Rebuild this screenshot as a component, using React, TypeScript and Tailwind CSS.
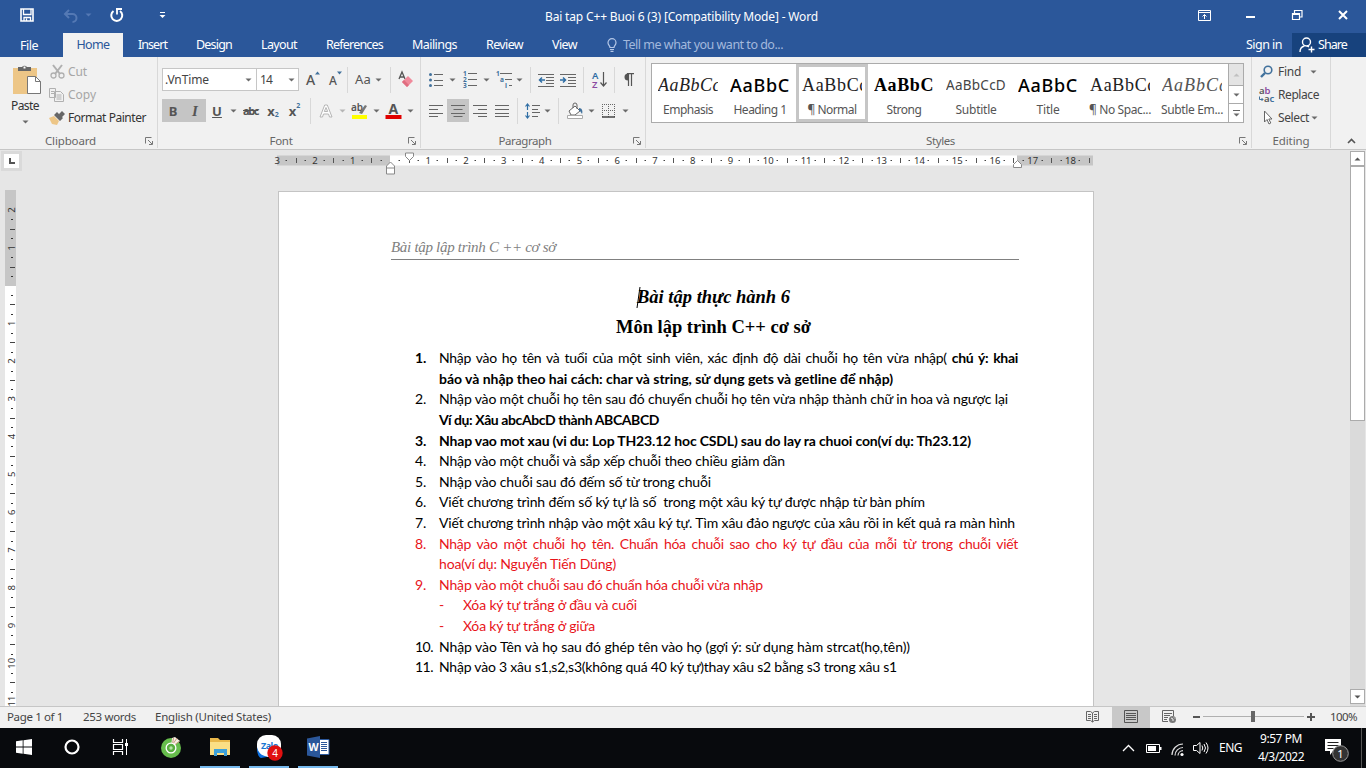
import { useLayoutEffect, useRef, useState } from "react";
import type { ReactNode } from "react";

/* Text tracked so that it fills a given width. */
function T({ w, children, className = "" }: { w: number; children: ReactNode; className?: string }) {
  const ref = useRef<HTMLSpanElement>(null);
  const [ls, setLs] = useState(0);
  useLayoutEffect(() => {
    const el = ref.current;
    if (!el) return;
    el.style.letterSpacing = "0px";
    const n = (el.textContent || "").length;
    setLs((w - el.getBoundingClientRect().width) / n);
    el.style.letterSpacing = "";
  }, [w]);
  return (
    <span ref={ref} className={"inline-block shrink-0 whitespace-pre " + className} style={{ letterSpacing: ls }}>
      {children}
    </span>
  );
}

function Svg({ w, h, children, className = "" }: { w: number; h: number; children: ReactNode; className?: string }) {
  return (
    <svg width={w} height={h} viewBox={`0 0 ${w} ${h}`} fill="none" className={"block shrink-0 overflow-visible " + className}>
      {children}
    </svg>
  );
}

const Arrow = ({ c = "#6a6a6a", className = "" }) => (
  <Svg w={7} h={4} className={className}><path d="M0.5 0.5h6l-3 3z" fill={c} /></Svg>
);
const Sep = ({ className = "" }) => <div className={"h-[26px] w-px shrink-0 bg-[#d8d8d8] " + className} />;
const Launcher = () => (
  <Svg w={8} h={8}>
    <path d="M0.5 6.5v-6h6M3 3l4 4M7.5 4v3.5H4" stroke="#777" />
  </Svg>
);

function Cell({ className = "", children }: { className?: string; children?: ReactNode }) {
  return <div className={"flex h-[23px] shrink-0 items-center justify-center " + className}>{children}</div>;
}

/* ---------- title bar and tabs ---------- */
function TitleBar() {
  return (
    <div className="flex h-[33px] items-center text-white">
      <Svg w={14} h={14} className="mt-[-3px] ml-5">
        <path d="M1 1h12v12H1z" stroke="#fff" strokeWidth="1.6" />
        <path d="M3.500 1v5.500h7.500V1M4 13V9.500h6.500V13M6.500 10.500v2.500" stroke="#fff" strokeWidth="1.3" />
      </Svg>
      <Svg w={15} h={14} className="mt-[-2px] ml-[29px]">
        <path d="M1.500 5h8a4 4 0 0 1 0 8M6 1L2 5l4 4" stroke="#5479b4" strokeWidth="2" />
      </Svg>
      <Arrow c="#5479b4" className="mt-[-3px] ml-[7px]" />
      <Svg w={15} h={15} className="mt-[-2px] ml-[17px]">
        <path d="M4.500 3A5.500 5.500 0 1 0 11 3" stroke="#fff" strokeWidth="2" />
        <path d="M7 1h6M8 6.500V1" stroke="#fff" strokeWidth="1.800" />
      </Svg>
      <Svg w={7} h={7} className="mt-[-2px] ml-[35px]">
        <path d="M1 0.500h5" stroke="#fff" /><path d="M0.500 3h6l-3 3z" fill="#fff" />
      </Svg>
      <T w={273} className="ml-[379px] text-[12px]">Bai tap C++ Buoi 6 (3) [Compatibility Mode] - Word</T>
      <Svg w={13} h={11} className="mt-[-3px] ml-[380px]">
        <path d="M0.500 0.500h12v10h-12zM0.500 2.500h12M6.500 9V4.500M4.500 6.500l2-2 2 2" stroke="#fff" />
      </Svg>
      <Svg w={9} h={3} className="mt-[1px] ml-[35px]"><path d="M0 1h9" stroke="#fff" strokeWidth="2" /></Svg>
      <Svg w={11} h={10} className="mt-[-3px] ml-[37px]">
        <path d="M0.500 3.500h7v6h-7zM2.500 3V0.500h7.500V7H8M0.500 4.500h7" stroke="#fff" strokeWidth="1.200" />
      </Svg>
      <Svg w={10} h={10} className="mt-[-3px] ml-[35px]"><path d="M1 1l8 8M9 1L1 9" stroke="#fff" strokeWidth="2" /></Svg>
    </div>
  );
}

function Tabs() {
  return (
    <div className="flex h-6 items-center text-[12.500px] text-white">
      <T w={18} className="ml-5 mt-[2px]">File</T>
      <div className="ml-[25px] flex h-6 w-[60px] items-center justify-center bg-[#f1f1f1] text-[#2b579a]"><T w={33}>Home</T></div>
      <T w={29} className="ml-[15px] mt-px">Insert</T>
      <T w={36} className="ml-[29px] mt-px">Design</T>
      <T w={36} className="ml-[29px] mt-px">Layout</T>
      <T w={57} className="ml-[29px] mt-px">References</T>
      <T w={45} className="ml-[29px] mt-px">Mailings</T>
      <T w={37} className="ml-[29px] mt-px">Review</T>
      <T w={25} className="ml-[29px] mt-px">View</T>
      <Svg w={10} h={14} className="ml-[30px]">
        <path d="M3 9.500C3 7.500 1 7 1 4.700a4 4 0 0 1 8 0C9 7 7 7.500 7 9.500zM3 11.500h4M3.500 13.300h3" stroke="#b4c7e7" strokeWidth="1.200" />
      </Svg>
      <T w={160} className="mt-px ml-[6px] text-[#a3b9dd]">Tell me what you want to do...</T>
      <T w={36} className="mt-px ml-[463px]">Sign in</T>
      <div className="ml-[10px] flex h-6 w-[74px] items-center bg-[#17427d]">
        <Svg w={16} h={16} className="ml-[7px]">
          <circle cx="7.500" cy="5" r="4" stroke="#fff" strokeWidth="1.400" />
          <path d="M1 15c0-4 2-5.500 4.500-6M9.500 12.500h6M12.500 9.500v6M8 8.800l2 1" stroke="#fff" strokeWidth="1.400" />
        </Svg>
        <T w={29} className="ml-[3px] mt-px">Share</T>
      </div>
    </div>
  );
}

/* ---------- ribbon ---------- */
function Group({ className, label, labelW, launcher = true, children }: { className: string; label: string; labelW: number; launcher?: boolean; children: ReactNode }) {
  return (
    <div className={"flex shrink-0 flex-col border-r border-[#d8d8d8] " + className}>
      <div className="h-[77px]">{children}</div>
      <div className="flex h-[14px] items-center text-[#666]">
        <div className="flex flex-1 justify-center"><T w={labelW}>{label}</T></div>
        {launcher && <div className="mr-1 w-[12px] pl-1"><Launcher /></div>}
      </div>
    </div>
  );
}

function Clipboard() {
  return (
    <Group className="w-[158px]" label="Clipboard" labelW={51}>
      <div className="flex">
        <div className="ml-[10px] flex w-[30px] flex-col items-center">
          <Svg w={30} h={31} className="mt-[7px] ml-[3px]">
            <path d="M1 4h24v26H1z" fill="#edc687" />
            <path d="M6 7V3h4a3 3 0 0 1 5 0h4v4z" fill="#666" /><path d="M11.500 2.500h2v2h-2z" fill="#fff" />
            <path d="M15.500 12.500h8l5 5v12h-13z" fill="#fff" stroke="#777" /><path d="M23.500 12.500v5h5" stroke="#777" />
          </Svg>
          <T w={28} className="mt-[3px] text-[12px] leading-[16px] text-[#333]">Paste</T>
          <Arrow className="mt-[6px]" />
        </div>
        <div className="ml-[9px] flex flex-col pt-[3px] text-[12px] text-[#a6a6a6]">
          <div className="flex h-[23px] items-center">
            <Svg w={15} h={15} className="ml-px">
              <path d="M3 1l7 9M12 1L5 10" stroke="#b0b0b0" strokeWidth="2" />
              <circle cx="3.500" cy="11.500" r="2.500" stroke="#b0b0b0" strokeWidth="1.300" /><circle cx="11.500" cy="11.500" r="2.500" stroke="#b0b0b0" strokeWidth="1.300" />
            </Svg>
            <T w={19} className="ml-[3px]">Cut</T>
          </div>
          <div className="flex h-[23px] items-center">
            <Svg w={15} h={14}>
              <path d="M0.500 0.500h6v9h-6zM5.500 3.500h6l3 3v7h-9z" fill="#f1f1f1" stroke="#b0b0b0" />
              <path d="M2 3.500h3M2 5.500h3M7.500 7h5M7.500 9h5M7.500 11h5" stroke="#b0b0b0" />
            </Svg>
            <T w={28} className="ml-1">Copy</T>
          </div>
          <div className="flex h-[23px] items-center text-[#333]">
            <Svg w={16} h={14}>
              <path d="M0 7l5-2 5 5-2 4-5-1z" fill="#edc687" />
              <path d="M5 4l3-3 6 6-3 3zM10 3l3-3 3 3-3 3z" fill="#666" />
            </Svg>
            <T w={78} className="ml-[3px]">Format Painter</T>
          </div>
        </div>
      </div>
    </Group>
  );
}

function FontGroup() {
  return (
    <Group className="w-[263px]" label="Font" labelW={23}>
      <div className="box-content flex h-[23px] items-center pt-[11px] text-[#555]">
        <div className="ml-1 flex h-[23px] w-[95px] items-center border border-[#c6c6c6] bg-white text-[12px] text-[#444]">
          <T w={44} className="ml-[2px]">.VnTime</T><Arrow className="ml-[36px]" />
        </div>
        <div className="-ml-px flex h-[23px] w-[43px] items-center border border-[#c6c6c6] bg-white text-[12px] text-[#444]">
          <T w={12} className="ml-[3px]">14</T><Arrow className="ml-[16px]" />
        </div>
        <div className="ml-[7px] flex w-[14px] items-start">
          <span className="text-[14px] font-medium leading-[20px]">A</span><Svg w={5} h={4} className="mt-[1px]"><path d="M0 3.500h5l-2.500-3z" fill="#41719c" /></Svg>
        </div>
        <div className="ml-[9px] flex w-[13px] items-start">
          <span className="mt-[2px] text-[12px] font-medium leading-[18px]">A</span><Svg w={5} h={4} className="mt-[1px]"><path d="M0 0.500h5l-2.500 3z" fill="#41719c" /></Svg>
        </div>
        <Sep className="ml-[5px]" />
        <T w={16} className="ml-[7px] text-[13px]">Aa</T>
        <Arrow className="ml-1" />
        <Sep className="ml-[8px]" />
        <Svg w={16} h={17} className="ml-[7px]">
          <path d="M1 8L4 1l3 7M2 6h4" stroke="#555" strokeWidth="1.300" />
          <path d="M4 11l6-6 5 5-6 6z" fill="#f08a9b" /><path d="M4 11l2-2 5 5-2 2z" fill="#e06d80" />
        </Svg>
      </div>
      <div className="mt-[8px] ml-1 flex text-[13px] leading-[18px] text-[#555]">
        <Cell className="w-[22px] bg-[#c5c5c5] font-bold">B</Cell>
        <Cell className="w-[22px] bg-[#c5c5c5] font-['Liberation_Serif'] text-[15px] font-bold italic">I</Cell>
        <Cell className="w-[22px] font-bold underline">U</Cell>
        <Cell className="w-[10px]"><Arrow /></Cell>
        <Cell className="w-[25px] text-[11px] font-bold line-through"><T w={15}>abc</T></Cell>
        <Cell className="w-[20px] font-bold">x<span className="mt-[9px] text-[7px] leading-[8px] text-[#41719c]">2</span></Cell>
        <Cell className="w-[23px] font-bold">x<span className="mb-[9px] text-[7px] leading-[8px] text-[#41719c]">2</span></Cell>
        <Cell className="w-[8px]"><Sep /></Cell>
        <Cell className="w-[24px]">
          <Svg w={14} h={14}><path d="M1 13L5.700 1h2.600L13 13h-2.500l-1-3h-5l-1 3zM5.300 7.500h3.400L7 3.500z" stroke="#b5b5b5" fill="#fff" /></Svg>
        </Cell>
        <Cell className="w-[8px]"><Arrow c="#b5b5b5" /></Cell>
        <Cell className="w-[26px]">
          <Svg w={17} h={18}>
            <text x="0" y="9" fontSize="10" fontWeight="600" fill="#555">ab</text>
            <path d="M8 11l6-8 2 1-5 8z" fill="#777" /><path d="M1 13h15v4H1z" fill="#ff0" />
          </Svg>
        </Cell>
        <Cell className="w-[8px]"><Arrow /></Cell>
        <Cell className="w-[26px]">
          <Svg w={17} h={18}>
            <text x="3.500" y="12" fontSize="14" fontWeight="700" fill="#555">A</text><path d="M0.500 13h16v4h-16z" fill="#e00000" />
          </Svg>
        </Cell>
        <Cell className="w-[9px]"><Arrow /></Cell>
      </div>
    </Group>
  );
}

const Lines = ({ d }: { d: string }) => <Svg w={14} h={12}><path d={d} stroke="#666" /></Svg>;

function Paragraph() {
  return (
    <Group className="w-[225px]" label="Paragraph" labelW={53}>
      <div className="ml-[8px] box-content flex h-[23px] items-center pt-[11px]">
        <Svg w={14} h={16}>
          <circle cx="1.500" cy="2.500" r="1.500" fill="#41719c" /><circle cx="1.500" cy="8" r="1.500" fill="#41719c" /><circle cx="1.500" cy="13.500" r="1.500" fill="#41719c" />
          <path d="M5 2.500h9M5 8.500h9M5 13.500h9" stroke="#666" />
        </Svg>
        <Arrow className="ml-[6px]" />
        <Svg w={15} h={17} className="ml-[7px]">
          <text fontSize="6.500" fontWeight="700" fill="#41719c"><tspan x="0" y="5">1</tspan><tspan x="0" y="11">2</tspan><tspan x="0" y="17">3</tspan></text>
          <path d="M5 2.500h9M5 8.500h9M5 14.500h9" stroke="#666" />
        </Svg>
        <Arrow className="ml-[5px]" />
        <Svg w={17} h={17} className="ml-[6px]">
          <text fontSize="6.500" fontWeight="700" fill="#41719c"><tspan x="0" y="5">1</tspan><tspan x="4" y="11">a</tspan><tspan x="9" y="17">i</tspan></text>
          <path d="M4 2.500h12M9 8.500h7M13 14.500h3" stroke="#666" />
        </Svg>
        <Arrow className="ml-[3px]" />
        <Sep className="ml-[7px]" />
        <Svg w={16} h={14} className="ml-[7px]">
          <path d="M0 1.500h16M8 4.500h8M8 7.500h8M8 10.500h8M0 13.500h16" stroke="#666" /><path d="M7 7H1.500M4 4.500L1.500 7 4 9.500" stroke="#2e6da4" strokeWidth="1.500" />
        </Svg>
        <Svg w={16} h={14} className="ml-[6px]">
          <path d="M0 1.500h16M8 4.500h8M8 7.500h8M8 10.500h8M0 13.500h16" stroke="#666" /><path d="M0 7h5.500M3 4.500L5.500 7 3 9.500" stroke="#2e6da4" strokeWidth="1.500" />
        </Svg>
        <Sep className="ml-[7px]" />
        <Svg w={15} h={17} className="ml-[8px]">
          <text x="0" y="8" fontSize="9.500" fontWeight="600" fill="#2e6da4">A</text><text x="0" y="16.500" fontSize="9.500" fontWeight="600" fill="#8a4aa0">Z</text>
          <path d="M11.500 1v14M8.500 11.500l3 3.500 3-3.500" stroke="#555" strokeWidth="1.200" />
        </Svg>
        <Sep className="ml-[7px]" />
        <Svg w={10} h={13} className="ml-[9px]">
          <path d="M4 0.500a3.500 3.500 0 0 0 0 7z" fill="#555" /><path d="M3 0.600h7M4.500 0.500V13M7.500 0.500V13" stroke="#555" strokeWidth="1.200" />
        </Svg>
      </div>
      <div className="mt-[8px] ml-[4px] flex">
        <Cell className="w-[22px]"><Lines d="M0 0.500h14M0 4.500h9M0 8.500h14M0 11.500h9" /></Cell>
        <Cell className="w-[22px] bg-[#c5c5c5]"><Lines d="M0 0.500h14M2.500 4.500h9M0 8.500h14M2.500 11.500h9" /></Cell>
        <Cell className="w-[22px]"><Lines d="M0 0.500h14M5 4.500h9M0 8.500h14M5 11.500h9" /></Cell>
        <Cell className="w-[22px]"><Lines d="M0 0.500h14M0 4.500h14M0 8.500h14M0 11.500h14" /></Cell>
        <Cell className="w-[8px]"><Sep /></Cell>
        <Cell className="ml-[4px] w-[15px]">
          <Svg w={15} h={16}>
            <path d="M2.500 1v6M0.500 3.500l2-2.500 2 2.500M2.500 15V9M0.500 12.500l2 2.500 2-2.500" stroke="#2e6da4" strokeWidth="1.200" />
            <path d="M7 2.500h8M7 6.500h6M7 9.500h8M7 13.500h6" stroke="#666" />
          </Svg>
        </Cell>
        <Cell className="ml-px w-[12px]"><Arrow /></Cell>
        <Cell className="w-[10px]"><Sep /></Cell>
        <Cell className="ml-[3px] w-[18px]">
          <Svg w={17} h={16}>
            <path d="M2 8l6-5 5 5-5 4H4z" fill="#fff" stroke="#666" /><path d="M6 5V2a2 2 0 0 1 4 0v4" stroke="#666" />
            <path d="M12 5c3 0 4 3 3 6-1-1-1-3-3-3z" fill="#41719c" /><path d="M0.500 12.500h15v3h-15z" fill="#fff" stroke="#aaa" />
          </Svg>
        </Cell>
        <Cell className="w-[14px]"><Arrow /></Cell>
        <Cell className="ml-[3px] w-[15px]">
          <Svg w={14} h={14}><path d="M0.500 0v13M6.500 0v13M12.500 0v13M0 0.500h13M0 6.500h13" stroke="#666" strokeDasharray="1 1" /><path d="M0 13h13" stroke="#444" strokeWidth="1.500" /></Svg>
        </Cell>
        <Cell className="w-[19px]"><Arrow /></Cell>
      </div>
    </Group>
  );
}

const styles = [
  { n: "Emphasis", nw: 50, s: "AaBbCc", c: "font-['Liberation_Serif'] italic text-[18px] text-[#222]", sw: 63 },
  { n: "Heading 1", nw: 53, s: "AaBbC", c: "text-[18px] font-medium text-black", sw: 60 },
  { n: "¶ Normal", nw: 49, s: "AaBbCc", c: "font-['Liberation_Serif'] text-[18px] text-[#222]", sw: 66 },
  { n: "Strong", nw: 35, s: "AaBbC", c: "font-['Liberation_Serif'] text-[18px] font-bold text-black", sw: 60 },
  { n: "Subtitle", nw: 41, s: "AaBbCcD", c: "text-[13.500px] text-[#444]", sw: 60 },
  { n: "Title", nw: 23, s: "AaBbC", c: "text-[18px] font-medium text-black", sw: 60 },
  { n: "¶ No Spac...", nw: 62, s: "AaBbCc", c: "font-['Liberation_Serif'] text-[18px] text-[#222]", sw: 66 },
  { n: "Subtle Em...", nw: 62, s: "AaBbCc", c: "font-['Liberation_Serif'] italic text-[18px] text-[#555]", sw: 66 },
];

function Styles() {
  return (
    <Group className="w-[606px]" label="Styles" labelW={29}>
      <div className="mt-[6px] ml-[5px] flex h-[60px] w-[593px] border border-[#ababab] bg-white">
        {styles.map((s, i) => (
          <div key={s.n} className={"flex h-[58px] w-[72px] shrink-0 flex-col items-center border-[3px] " + (i === 2 ? "border-[#c6c6c6]" : "border-transparent")}>
            <div className="mt-[5px] flex h-[26px] w-[60px] items-center overflow-hidden"><T w={s.sw} className={"leading-[26px] " + s.c}>{s.s}</T></div>
            <T w={s.nw} className="mt-[4px] text-[12px] leading-[16px] text-[#555]">{s.n}</T>
          </div>
        ))}
        <div className="ml-auto flex w-[15px] flex-col border-l border-[#ababab]">
          <div className="flex h-[21px] items-center justify-center bg-[#e4e4e4]"><Arrow c="#c0c0c0" className="rotate-180" /></div>
          <div className="flex flex-1 items-center justify-center border-y border-[#ababab]"><Arrow /></div>
          <div className="flex h-[18px] flex-col items-center justify-center gap-[2px]"><div className="h-px w-[7px] bg-[#666]" /><Arrow /></div>
        </div>
      </div>
    </Group>
  );
}

function Editing() {
  return (
    <Group className="w-[79px]" label="Editing" labelW={37} launcher={false}>
      <div className="ml-[7px] flex flex-col pt-[3px] text-[12px] text-[#444]">
        <div className="flex h-[23px] items-center">
          <Svg w={15} h={13} className="-mt-px"><circle cx="9" cy="5" r="3.800" stroke="#41719c" strokeWidth="1.600" /><path d="M6 8l-4 4" stroke="#41719c" strokeWidth="2.400" /></Svg>
          <T w={23} className="ml-[4px]">Find</T><Arrow className="ml-[9px]" />
        </div>
        <div className="flex h-[23px] items-center">
          <Svg w={16} h={16}>
            <text x="0" y="7" fontSize="9.500" fontWeight="600" fill="#555">a<tspan fill="#8a4aa0">b</tspan></text>
            <text x="5" y="15" fontSize="9.500" fontWeight="600" fill="#555">a<tspan fill="#41719c">c</tspan></text>
            <path d="M0.500 9.500v3H4M2.500 11L4 12.500 2.500 14" stroke="#41719c" />
          </Svg>
          <T w={41} className="ml-[3px]">Replace</T>
        </div>
        <div className="flex h-[23px] items-center">
          <Svg w={16} h={15}><path d="M5.500 1v11l2.500-2.500 2 4.500 1.800-1-2-4h3.200z" fill="#fff" stroke="#666" /></Svg>
          <T w={31} className="ml-[3px]">Select</T><Arrow className="ml-[2px]" />
        </div>
      </div>
    </Group>
  );
}

/* ---------- rulers ---------- */
function HRuler() {
  const p = 37.78;
  const items: ReactNode[] = [];
  for (let q = -12; q <= 74; q++) {
    const x = 113 + (q * p) / 4;
    const m = ((q % 4) + 4) % 4;
    if (q === 0) continue;
    if (m === 0) items.push(<text key={q} x={x + 0.5} y="10" fontSize="9.500" fill="#333" textAnchor="middle">{Math.abs(q / 4)}</text>);
    else if (m === 2) items.push(<path key={q} d={`M${Math.round(x) + 0.5} 4v5`} stroke="#555" />);
    else items.push(<path key={q} d={`M${Math.round(x) - 0.5} 6.500h1.500`} stroke="#444" />);
  }
  return (
    <Svg w={818} h={24} className="ml-[261px]">
      <path d="M0 1.500h113v10H0z" fill="#c6c6c6" /><path d="M113 1.500h627v10H113z" fill="#fff" /><path d="M740 1.500h76v10h-76z" fill="#c6c6c6" />
      {items}
      <path d="M128.500 -1h8v3.500l-4 4-4-4z" fill="#fff" stroke="#888" />
      <path d="M109.500 20v-8l4-4 4 4v8zM109.500 14h8" fill="#fff" stroke="#888" />
      <path d="M736.500 13.500v-3l4-4 4 4v3z" fill="#fff" stroke="#888" />
    </Svg>
  );
}

function VRuler() {
  const p = 37.78;
  const items: ReactNode[] = [];
  for (let q = -9; q <= 44; q++) {
    const y = 95.500 + (q * p) / 4;
    const m = ((q % 4) + 4) % 4;
    if (q === 0) continue;
    if (m === 0) items.push(<text key={q} x="0" y="0" fontSize="9.500" fill="#333" textAnchor="middle" transform={`translate(10 ${y}) rotate(-90)`}>{Math.abs(q / 4)}</text>);
    else if (m === 2) items.push(<path key={q} d={`M5 ${Math.round(y) + 0.5}h5`} stroke="#444" />);
    else if (q > -9) items.push(<path key={q} d={`M6 ${Math.round(y) + 0.5}h2`} stroke="#333" />);
  }
  return (
    <Svg w={11} h={516} className="mt-[12px] ml-[5px]">
      <path d="M0 0h11v96H0z" fill="#c6c6c6" /><path d="M0 96h11v420H0z" fill="#fff" />
      {items}
    </Svg>
  );
}

/* ---------- document ---------- */
function Item({ n, bold = false, red = false, children }: { n: string; bold?: boolean; red?: boolean; children: ReactNode }) {
  return (
    <div className={"flex h-[20.600px] items-center " + (red ? "text-[#e8141a] " : "") + (bold ? "font-bold" : "")}>
      <div className="w-6 shrink-0">{n && <T w={n.length === 2 ? 11 : 18}>{n}</T>}</div>
      {children}
    </div>
  );
}

function Page() {
  return (
    <div className="ml-[262px] h-[515px] w-[816px] border border-b-0 border-[#c4c4c4] bg-white font-['Liberation_Serif',serif]">
      <div className="mt-[46px] ml-[112px] h-[22px] w-[628px] border-b border-[#808080] text-[15px] leading-[18px] text-[#808080] italic">
        <T w={165}>Bài tập lập trình C ++ cơ sở</T>
      </div>
      <div className="mt-[25px] ml-[357px] flex h-[26px] items-center text-[18.500px] font-bold italic">
        <Svg w={5} h={22} className="-mr-[4px]"><path d="M4 0L1 21" stroke="#000" /></Svg>
        <T w={153}>Bài tập thực hành 6</T>
      </div>
      <div className="mt-[4px] ml-[337px] flex h-[26px] items-center text-[18.500px] font-bold">
        <T w={195}>Môn lập trình C++ cơ sở</T>
      </div>
      <div className="mt-[7.300px] ml-[136px] w-[604px] font-['Lato','Open_Sans',sans-serif] text-[14px] leading-[20.600px] text-black">
        <Item n="1." bold>
          <div className="w-[579px] text-justify font-normal tracking-[-0.300px] [text-align-last:justify]">Nhập vào họ tên và tuổi của một sinh viên, xác định độ dài chuỗi họ tên vừa nhập( <b>chú ý: khai</b></div>
        </Item>
        <Item n="" bold><T w={454}>báo và nhập theo hai cách: char và string, sử dụng gets và getline để nhập)</T></Item>
        <Item n="2."><T w={569}>Nhập vào một chuỗi họ tên sau đó chuyển chuỗi họ tên vừa nhập thành chữ in hoa và ngược lại</T></Item>
        <Item n="" bold><T w={220}>Ví dụ: Xâu abcAbcD thành ABCABCD</T></Item>
        <Item n="3." bold><T w={532}>Nhap vao mot xau (vi du: Lop TH23.12 hoc CSDL) sau do lay ra chuoi con(ví dụ: Th23.12)</T></Item>
        <Item n="4."><T w={346}>Nhập vào một chuỗi và sắp xếp chuỗi theo chiều giảm dần</T></Item>
        <Item n="5."><T w={272}>Nhập vào chuỗi sau đó đếm số từ trong chuỗi</T></Item>
        <Item n="6."><T w={486}>Viết chương trình đếm số ký tự là số  trong một xâu ký tự được nhập từ bàn phím</T></Item>
        <Item n="7."><T w={576}>Viết chương trình nhập vào một xâu ký tự. Tìm xâu đảo ngược của xâu rồi in kết quả ra màn hình</T></Item>
        <Item n="8." red>
          <div className="w-[579px] text-justify tracking-[-0.300px] [text-align-last:justify]">Nhập vào một chuỗi họ tên. Chuẩn hóa chuỗi sao cho ký tự đầu của mỗi từ trong chuỗi viết</div>
        </Item>
        <Item n="" red><T w={177}>hoa(ví dụ: Nguyễn Tiến Dũng)</T></Item>
        <Item n="9." red><T w={324}>Nhập vào một chuỗi sau đó chuẩn hóa chuỗi vừa nhập</T></Item>
        <Item n="" red><span className="w-6">-</span><T w={174}>Xóa ký tự trắng ở đầu và cuối</T></Item>
        <Item n="" red><span className="w-6">-</span><T w={132}>Xóa ký tự trắng ở giữa</T></Item>
        <Item n="10."><T w={471}>Nhập vào Tên và họ sau đó ghép tên vào họ (gợi ý: sử dụng hàm strcat(họ,tên))</T></Item>
        <Item n="11."><T w={458}>Nhập vào 3 xâu s1,s2,s3(không quá 40 ký tự)thay xâu s2 bằng s3 trong xâu s1</T></Item>
      </div>
    </div>
  );
}

function Workspace() {
  return (
    <div className="flex h-[556px] bg-[#e6e6e6]">
      <div className="w-4 shrink-0">
        <div className="relative z-10 flex h-[28px] items-start pl-[1px] pt-[1px]">
          <div className="flex h-5 w-[21px] shrink-0 items-center justify-center border-[3px] border-[#dadada] bg-white">
            <Svg w={6} h={6}><path d="M1 0v5h5" stroke="#555" strokeWidth="2" /></Svg>
          </div>
        </div>
        <VRuler />
      </div>
      <div className="flex flex-1 flex-col">
        <div className="h-[41px] pt-[3.500px]"><HRuler /></div>
        <Page />
      </div>
      <div className="flex w-[16px] shrink-0 flex-col pr-px pt-[1px]">
        <div className="flex h-full w-[15px] flex-col items-center bg-[#dadada]">
          <div className="flex h-[15px] w-[15px] shrink-0 items-center justify-center border border-[#ababab] bg-white"><Arrow c="#555" className="rotate-180" /></div>
          <div className="h-[255px] w-[15px] border border-[#ababab] bg-white" />
          <div className="mt-auto mb-[2px] flex h-[15px] w-[15px] shrink-0 items-center justify-center border border-[#ababab] bg-white"><Arrow c="#555" /></div>
        </div>
      </div>
    </div>
  );
}

function StatusBar() {
  return (
    <div className="flex h-[22px] items-center border-t border-[#c6c6c6] bg-[#f1f1f1] text-[11.500px] text-[#444]">
      <T w={56} className="ml-[7px] -mt-[2px]">Page 1 of 1</T>
      <T w={53} className="ml-5 -mt-[2px]">253 words</T>
      <T w={116} className="ml-[19px] -mt-[2px]">English (United States)</T>
      <Svg w={13} h={13} className="-mt-[2px] ml-[815px]">
        <path d="M0.500 1.500h4l2 1.500 2-1.500h4v9h-4l-2 1.500-2-1.500h-4zM6.500 3v9M2 4.500h3M2 6.500h3M2 8.500h3M8 4.500h3M8 6.500h3M8 8.500h3" stroke="#666" />
      </Svg>
      <div className="ml-[13px] flex h-[21px] w-[38px] items-center justify-center bg-[#c8c8c8] pb-[2px]">
        <Svg w={14} h={13}><path d="M0.500 0.500h13v12h-13zM2 3.500h10M2 5.500h10M2 7.500h10M2 9.500h10" stroke="#555" /></Svg>
      </div>
      <Svg w={15} h={14} className="-mt-[2px] ml-3">
        <path d="M6 11.500H0.500v-11h11V6M2 3.500h8M2 5.500h6M2 7.500h4M2 9.500h3" stroke="#666" /><circle cx="10.500" cy="9.500" r="3.500" fill="#777" /><path d="M9 8l2 1v2M12 7.500l1 1" stroke="#eee" />
      </Svg>
      <Svg w={7} h={2} className="-mt-[2px] ml-[16px]"><path d="M0 1h7" stroke="#555" strokeWidth="2" /></Svg>
      <div className="-mt-[2px] ml-[3px] flex h-3 w-[101px] items-center">
        <div className="h-px w-12 bg-[#b0b0b0]" /><div className="h-[11px] w-1 bg-[#666]" /><div className="h-px flex-1 bg-[#b0b0b0]" />
      </div>
      <Svg w={8} h={8} className="-mt-[2px] ml-[3px]"><path d="M0 4h8M4 0v8" stroke="#555" strokeWidth="2" /></Svg>
      <T w={27} className="-mt-[2px] ml-[15px]">100%</T>
    </div>
  );
}

function TaskItem({ open = false, children }: { open?: boolean; children: ReactNode }) {
  return (
    <div className={"flex h-10 w-10 items-center justify-center border-b-2 " + (open ? "border-[#76b9ed]" : "border-transparent")}>{children}</div>
  );
}

function Taskbar() {
  return (
    <div className="flex h-10 items-center bg-[#080a0d] text-[12px] text-white">
      <div className="ml-1 flex gap-[9px]">
        <TaskItem><Svg w={16} h={16}><path d="M0 2.300l6.700-1v6.300H0zM7.500 1.200L16 0v7.600H7.500zM0 8.400h6.700v6.300l-6.700-1zM7.500 8.400H16V16l-8.500-1.200z" fill="#fff" /></Svg></TaskItem>
        <TaskItem><Svg w={16} h={16} className="-ml-[3px]"><circle cx="8" cy="8" r="6.500" stroke="#fff" strokeWidth="2.200" /></Svg></TaskItem>
        <TaskItem><Svg w={17} h={16} className="-ml-1"><path d="M1.500 0v3.500h9V0M1.500 16v-3.500h9V16M1.500 5.500h9v5h-9z" stroke="#fff" strokeWidth="1.200" /><path d="M14.500 0v16" stroke="#fff" /><path d="M13 4h3v3h-3z" fill="#fff" /></Svg></TaskItem>
        <TaskItem><Svg w={22} h={22} className="-mt-px">
          <circle cx="11" cy="12" r="10" fill="#66bd4c" /><path d="M11 12L12 2l3-1 5 4z" fill="#f4efe4" /><path d="M13.500 2l-1 6M17 2l-4 6M19.500 5l-5 4" stroke="#c99a80" />
          <circle cx="11" cy="12" r="5.500" fill="#fff" /><circle cx="11" cy="12" r="4.200" fill="#58ad3f" /><circle cx="11" cy="12" r="1.700" fill="#b6e3a6" />
        </Svg></TaskItem>
        <TaskItem open><Svg w={22} h={20} className="-mt-px">
          <path d="M1 1h8l2 2h10v15H1z" fill="#e9b84a" /><path d="M1 5h20v13H1z" fill="#fbdf85" /><path d="M5 19v-7h13v7h-3v-3H8v3z" fill="#3ea1d9" />
        </Svg></TaskItem>
        <TaskItem open><Svg w={26} h={26}>
          <rect x="1" y="1" width="24" height="22" rx="9" fill="#fff" /><path d="M1 13c1 5 4 9 11 9.700L5 24c-3-1-4-6-4-11z" fill="#0b6fe0" />
          <text x="5" y="14.500" fontSize="9" fontWeight="700" fill="#1976d2" letterSpacing="-0.500">Zalo</text>
          <circle cx="19" cy="19" r="7.700" fill="#e01010" /><text x="19" y="22.500" fontSize="10" fill="#fff" textAnchor="middle">4</text>
        </Svg></TaskItem>
        <TaskItem open><Svg w={23} h={22}>
          <path d="M12 3.500h10v15H12z" fill="#fff" stroke="#2b579a" /><path d="M14 6.500h6M14 8.500h6M14 10.500h6M14 12.500h6M14 14.500h6" stroke="#2b579a" />
          <path d="M0 2.500L13 0v22L0 19.500z" fill="#2b579a" /><text x="6.500" y="15" fontSize="10.500" fontWeight="700" fill="#fff" textAnchor="middle">W</text>
        </Svg></TaskItem>
      </div>
      <Svg w={13} h={8} className="ml-[784px]"><path d="M1 7l5.500-5.500L12 7" stroke="#fff" strokeWidth="1.300" /></Svg>
      <Svg w={16} h={9} className="ml-[11px]"><path d="M0.500 0.500h13v8h-13z" stroke="#fff" /><path d="M2 2h8v5H2zM14 3h1.500v3H14z" fill="#fff" /></Svg>
      <Svg w={14} h={14} className="ml-[9px] mt-[3px]">
        <path d="M1 12A11 11 0 0 1 12 1M4 12.500A8 8 0 0 1 12 4.500M7 12.500A5 5 0 0 1 12 7.700" stroke="#ddd" strokeWidth="1.200" /><circle cx="11" cy="11.500" r="1.600" fill="#fff" />
      </Svg>
      <Svg w={16} h={14} className="ml-[8px]">
        <path d="M0.500 4.500h3l3.500-3v11l-3.500-3h-3zM9 4.500q1.500 2.500 0 5M11 3q3 4 0 8M13 1.500q4 5.500 0 11" stroke="#fff" />
      </Svg>
      <T w={23} className="ml-[10px]">ENG</T>
      <div className="ml-4 flex w-[46px] flex-col items-center gap-[2px] pb-px leading-[16px]"><T w={42}>9:57 PM</T><T w={46}>4/3/2022</T></div>
      <Svg w={25} h={26} className="mt-[4px] ml-[20px]">
        <path d="M1 2h16v12H9l-3 4v-4H1z" fill="#fff" /><path d="M3.500 5.500h11M3.500 8.500h11M3.500 11.500h6" stroke="#222" />
        <circle cx="16.500" cy="16.500" r="7.800" fill="#333" stroke="#999" /><text x="16.500" y="20.500" fontSize="11" fill="#fff" textAnchor="middle">1</text>
      </Svg>
      <div className="ml-3 h-10 w-px bg-[#555]" />
    </div>
  );
}

export default function App() {
  return (
    <div className="flex h-[768px] w-[1366px] flex-col overflow-hidden font-['Noto_Sans',sans-serif]">
      <div className="bg-[#2b579a]"><TitleBar /><Tabs /></div>
      <div className="flex h-[93px] border-b border-[#c6c6c6] bg-[#f1f1f1] pb-px text-[11.500px]">
        <Clipboard /><FontGroup /><Paragraph /><Styles /><Editing />
        <div className="flex flex-1 items-end justify-center pb-1 pl-[5px]"><Svg w={9} h={6}><path d="M1 5l3.500-3.500L8 5" stroke="#555" strokeWidth="1.600" /></Svg></div>
      </div>
      <Workspace />
      <StatusBar />
      <Taskbar />
    </div>
  );
}
